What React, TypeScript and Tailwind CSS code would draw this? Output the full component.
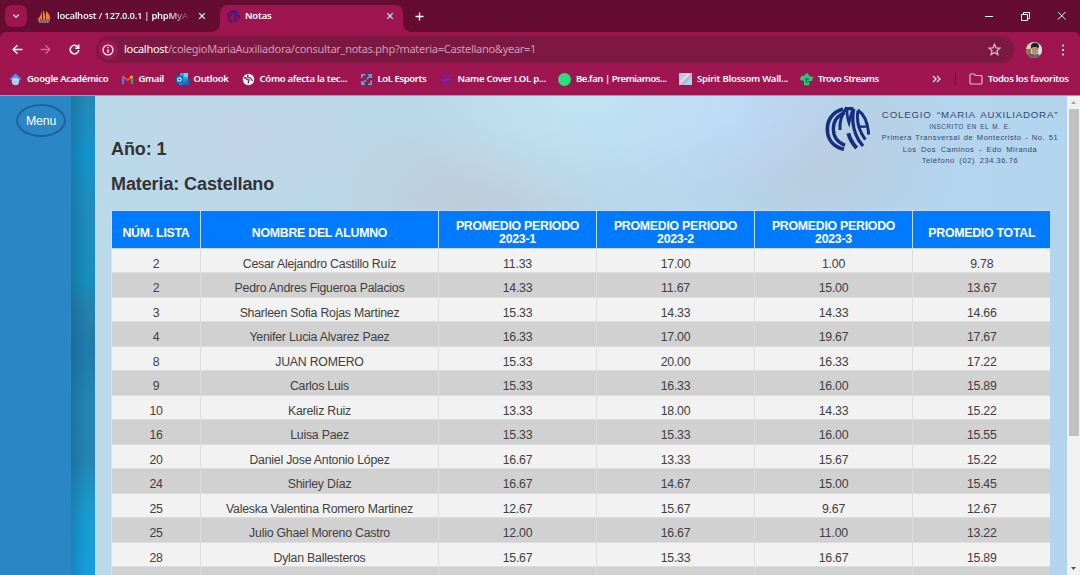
import React from "react";

type Row = [string, string, string, string, string, string];

const rows: Row[] = [
  ["2", "Cesar Alejandro Castillo Ruíz", "11.33", "17.00", "1.00", "9.78"],
  ["2", "Pedro Andres Figueroa Palacios", "14.33", "11.67", "15.00", "13.67"],
  ["3", "Sharleen Sofia Rojas Martinez", "15.33", "14.33", "14.33", "14.66"],
  ["4", "Yenifer Lucia Alvarez Paez", "16.33", "17.00", "19.67", "17.67"],
  ["8", "JUAN ROMERO", "15.33", "20.00", "16.33", "17.22"],
  ["9", "Carlos Luis", "15.33", "16.33", "16.00", "15.89"],
  ["10", "Kareliz Ruiz", "13.33", "18.00", "14.33", "15.22"],
  ["16", "Luisa Paez", "15.33", "15.33", "16.00", "15.55"],
  ["20", "Daniel Jose Antonio López", "16.67", "13.33", "15.67", "15.22"],
  ["24", "Shirley Díaz", "16.67", "14.67", "15.00", "15.45"],
  ["25", "Valeska Valentina Romero Martinez", "12.67", "15.67", "9.67", "12.67"],
  ["25", "Julio Ghael Moreno Castro", "12.00", "16.67", "11.00", "13.22"],
  ["28", "Dylan Ballesteros", "15.67", "15.33", "16.67", "15.89"],
  ["", "", "", "", "", ""],
];

const grid = "grid grid-cols-[89px_238px_158px_158px_158px_137.5px]";

function SchoolMark({ className, color }: { className: string; color: string }) {
  return (
    <svg viewBox="0 0 135 138" className={className} fill="none" stroke={color}>
      <path d="M54 9C22 18 7 43 7 69c0 32 19 54 50 61" strokeWidth="11" />
      <path d="M60 20C36 29 25 47 25 69c0 22 13 40 35 49" strokeWidth="10" />
      <path d="M65 4C52 22 43 46 45 72" strokeWidth="9" />
      <path d="M61 8h24" strokeWidth="10" />
      <path d="M66 8c0 18 2 32 6 43 3-14 6-27 12-41" strokeWidth="8" />
      <path d="M86 8c-5 27-3 53 6 76 5 14 13 26 22 36" strokeWidth="10" />
      <path d="M70 82c5 18 13 32 25 44" strokeWidth="12" />
      <path d="M98 12c20 13 31 36 33 74M99 14c-5 26 0 56 22 87" strokeWidth="9" />
      <path d="M98 62h26" strokeWidth="7" />
    </svg>
  );
}

function Bookmark({ width, icon, label, track = "" }: { width: string; icon: React.ReactNode; label: string; track?: string }) {
  return (
    <div className={`flex shrink-0 items-center gap-[5px] ${width}`}>
      <span className="flex h-[13px] w-[13px] shrink-0 items-center justify-center">{icon}</span>
      <span className={`whitespace-nowrap ${track}`}>{label}</span>
    </div>
  );
}

const s = "h-[13px] w-[13px]";

function Tabs() {
  return (
    <div className="flex h-8 items-end bg-[#650c32]">
      <div className="flex h-8 w-[220px] items-center rounded-br-[8px]">
        <div className="ml-[5px] flex h-[22px] w-[22px] items-center justify-center rounded-[7px] bg-[#9e154f]">
          <svg viewBox="0 0 8 8" className="h-2 w-2" fill="none" stroke="#fff" strokeWidth="1.3"><path d="M1.3 2.6 4 5.2l2.700-2.600" /></svg>
        </div>
        <svg viewBox="0 0 14 13" className="ml-[10px] h-[13px] w-[14px]">
          <path d="M5 1v8H1q3-3 4-8zM6 0q3 5 2 9H6zM9 1q4 3 4 8H9z" fill="#e98b25" />
          <path d="M1 10h12M2 12h10" stroke="#a9a3aa" strokeWidth="1.300" strokeDasharray="2 .6" />
        </svg>
        <div className="ml-[6px] w-[133px] whitespace-nowrap text-[9.500px] font-semibold">
          <span className="bg-[linear-gradient(to_right,#fff_113px,#650c32_133px)] bg-clip-text tracking-[-0.29px] text-transparent">localhost / 127.0.0.1 | phpMyAc</span>
        </div>
        <svg viewBox="0 0 8 8" className="ml-2 h-[8px] w-[8px]" stroke="#fff" strokeWidth="1.2"><path d="m1.200 1.200 5.600 5.600m0-5.600L1.200 6.800" /></svg>
      </div>
      <div className="relative flex h-[27px] w-[183px] items-center rounded-t-[8px] bg-[#9e154f] pl-[7px]">
        <div className="absolute bottom-0 -left-2 h-2 w-2 bg-[radial-gradient(circle_at_0_0,#650c32_7.500px,#9e154f_8px)]" />
        <div className="absolute -right-2 bottom-0 h-2 w-2 bg-[radial-gradient(circle_at_100%_0,#650c32_7.500px,#9e154f_8px)]" />
        <SchoolMark className="-mt-1 h-[13px] w-[13px]" color="#2b159b" />
        <span className="-mt-1 ml-[5px] text-[9.500px] font-semibold tracking-[-0.2px] text-white">Notas</span>
        <svg viewBox="0 0 8 8" className="-mt-[5px] mr-[9px] ml-auto h-[8px] w-[8px]" stroke="#fff" strokeWidth="1.2"><path d="m1.200 1.200 5.600 5.600m0-5.600L1.200 6.800" /></svg>
      </div>
      <div className="flex h-8 flex-1 items-center pl-[12px]">
        <svg viewBox="0 0 9 9" className="h-[9px] w-[9px]" stroke="#fff" strokeWidth="1.300"><path d="M4.500.5v8m-4-4h8" /></svg>
        <svg viewBox="0 0 82 10" className="mr-[13px] ml-auto h-[10px] w-[82px]" fill="none" stroke="#fff">
          <path d="M0 5.500h8M36.500 3.500h6v6h-6zM38.500 3V1.500h6v6h-1.500M73 1l7.500 7.500m0-7.500L73 8.500" />
        </svg>
      </div>
    </div>
  );
}

function Toolbar() {
  return (
    <div className="flex h-[31px] items-end rounded-t-[6px] bg-[#9e154f]">
      <div className="flex h-[27px] w-[96px] items-center pl-[12px]">
        <svg viewBox="0 0 11 11" className="h-[11px] w-[11px]" fill="none" stroke="#fff" strokeWidth="1.400"><path d="M10.500 5.500H1.500M5.500 1.200 1.200 5.500l4.300 4.300" /></svg>
        <svg viewBox="0 0 11 11" className="ml-[17px] h-[11px] w-[11px]" fill="none" stroke="#cc6a96" strokeWidth="1.300"><path d="M.5 5.500h9M5.500 1.200l4.300 4.300-4.300 4.300" /></svg>
        <svg viewBox="0 0 11 11" className="ml-[18px] h-[11px] w-[11px]" fill="none" stroke="#fff" strokeWidth="1.500"><path d="M9.200 3.300A4.300 4.300 0 1 0 9.800 6M9.700.5v3.700H6" /></svg>
      </div>
      <div className="flex h-[27px] w-[918px] items-center rounded-full bg-[#7c1842] pl-[2px]">
        <div className="flex h-[20px] w-[20px] items-center justify-center rounded-full bg-[#9e154f]">
          <svg viewBox="0 0 12 12" className="h-3 w-3" fill="none" stroke="#fff" strokeWidth="1.200"><circle cx="6" cy="6" r="5" /><path d="M6 5.200v3.500M6 3v1.300" /></svg>
        </div>
        <span className="ml-[6px] text-[11px] tracking-[-0.27px] whitespace-nowrap text-[#d39bb3]"><span className="text-white">localhost</span>/colegioMariaAuxiliadora/consultar_notas.php?materia=Castellano&amp;year=1</span>
        <svg viewBox="0 0 13 13" className="mr-[13px] ml-auto h-[13px] w-[13px]" fill="none" stroke="#d9b5c5" strokeWidth="1.300"><path d="m6.500 1.200 1.500 3.600 4 .3-3 2.600.9 3.900-3.400-2.100-3.400 2.100.9-3.900-3-2.600 4-.3z" /></svg>
      </div>
      <div className="flex h-[27px] flex-1 items-center pl-[12px]">
        <svg viewBox="0 0 16 16" className="h-4 w-4">
          <clipPath id="av"><circle cx="8" cy="8" r="8" /></clipPath>
          <g clipPath="url(#av)"><path fill="#d5cfc1" d="M0 0h16v16H0z" /><path fill="#94714d" d="M0 7h5v9H0z" /><path fill="#d7ded9" d="M12 3h4v10h-4z" /><path fill="#596468" d="M1 16q2-5 7-4 6-1 7 4z" /><path fill="#bb8b72" d="M6 5h6v5q-1 4-3 3-3-1-3-4z" /><path fill="#18252b" d="M5 7V3q3-4 7-1 2 2 0 5l-1-2-4 0z" /></g>
        </svg>
        <svg viewBox="0 0 4 14" className="ml-[19px] h-[14px] w-1" fill="#fff"><circle cx="2" cy="2.500" r="1.100" /><circle cx="2" cy="7" r="1.100" /><circle cx="2" cy="11.500" r="1.100" /></svg>
      </div>
    </div>
  );
}

function Bookmarks() {
  return (
    <div className="flex h-8 items-center bg-[#9e154f] pl-[9px] text-[9.500px] font-semibold text-white">
      <Bookmark width="w-[111.500px]" label="Google Académico" track="tracking-[-0.29px]" icon={<svg viewBox="0 0 13 13" className={s}><path d="m6.500.5 6 5.500-6 4-6-4z" fill="#4d91f5" /><circle cx="6.500" cy="8.500" r="3.700" fill="#a9c8f8" /><path d="M3.200 7q3.300-2 6.600 0" stroke="#e1edff" fill="none" /></svg>} />
      <Bookmark width="w-[55px]" label="Gmail" track="tracking-[-0.3px]" icon={<svg viewBox="0 0 13 13" className={s} fill="none" strokeWidth="2.200"><path d="M2 11V3" stroke="#4285f4" /><path d="M11 11V4" stroke="#34a853" /><path d="m1.500 3 5 4 4-3.200" stroke="#ea4335" /><path d="m9.500 5 2-2" stroke="#fbbc04" /></svg>} />
      <Bookmark width="w-[66px]" label="Outlook" track="tracking-[-0.35px]" icon={<svg viewBox="0 0 13 13" className={s}><path d="M4 0h8v7H4z" fill="#28a8ea" /><path d="M8 0h4v4H8z" fill="#50d9ff" /><path d="M3 6h10v6H3z" fill="#1490df" /><path d="m5 12 8-6v6z" fill="#1669bd" /><path d="M0 3h7v7H0z" fill="#0669ae" /><circle cx="3.500" cy="6.500" r="1.800" fill="none" stroke="#fff" strokeWidth="1.100" /></svg>} />
      <Bookmark width="w-[118px]" label="Cómo afecta la tec..." track="tracking-[-0.27px]" icon={<svg viewBox="0 0 13 13" className={s}><circle cx="6.500" cy="6.500" r="5.700" fill="#fff" /><path d="M2 4.500q2 0 3 2l2 .5-1 3.500M6 1.500 5.500 4l3 1 2 3" fill="none" stroke="#9e154f" strokeWidth="1.300" /></svg>} />
      <Bookmark width="w-[80px]" label="LoL Esports" track="tracking-[-0.4px]" icon={<svg viewBox="0 0 13 13" className={s} fill="none" stroke="#3cb8dd" strokeWidth="1.600"><path d="M1.800 5V1.800h3.700M8 1.800h3.200V5M11.200 7.500v3.700H8M5 11.200H1.800V8M3 10l3-3M7 6l3-3" /></svg>} />
      <Bookmark width="w-[118.500px]" label="Name Cover LOL p..." track="tracking-[-0.25px]" icon={<svg viewBox="0 0 13 13" className={s} fill="none" stroke="#6624b7" strokeWidth="1.800"><path d="M10.500 4A4.500 4.500 0 1 0 10.500 9" /><path d="M3 8.500q2-2.500 8-2" stroke="#8428b4" strokeWidth="1.400" /></svg>} />
      <Bookmark width="w-[121px]" label="Be.fan | Premiamos..." track="tracking-[-0.45px]" icon={<span className="h-[13px] w-[13px] rounded-full bg-[#27df7b]" />} />
      <Bookmark width="w-[121px]" label="Spirit Blossom Wall..." track="tracking-[-0.23px]" icon={<span className="h-[12px] w-[13px] bg-[linear-gradient(135deg,#c6bfe8_15%,#8edbe8_30%,#f1e5cf_45%,#c79de7_55%,#94dfe7_70%,#d0c5ef)]" />} />
      <Bookmark width="w-[120px]" label="Trovo Streams" track="tracking-[-0.41px]" icon={<svg viewBox="0 0 13 13" className={s}><path d="M1 3h3.500V1.500L8 0l1 3 4 1-1 4H9.500L9 12.500 4 12V8L0 7z" fill="#28c978" /><path d="M5 6h4M7 5l-1 4q2 1 3-1" stroke="#155d3e" fill="none" strokeWidth=".9" /></svg>} />
      <svg viewBox="0 0 9 8" className="ml-[12px] h-2 w-[9px] shrink-0" fill="none" stroke="#fff" strokeWidth="1.200"><path d="m1 1 3 3-3 3m4-6 3 3-3 3" /></svg>
      <div className="ml-[14px] h-3 w-px shrink-0 bg-[#68102f]" />
      <svg viewBox="0 0 14 12" className="mr-[5px] ml-[13px] h-3 w-[14px] shrink-0" fill="none" stroke="#e2c6d1" strokeWidth="1.100"><path d="M1 2q0-1 1-1h3l1.500 1.500H12q1 0 1 1V10q0 1-1 1H2q-1 0-1-1z" /></svg>
      <span className="whitespace-nowrap tracking-[-0.31px]">Todos los favoritos</span>
    </div>
  );
}

function Letterhead() {
  return (
    <div className="absolute top-[10px] right-[9px] flex text-[#35466c]">
      <SchoolMark className="h-[46px] w-[45px]" color="#172d7d" />
      <div className="ml-[12px] flex w-[176px] flex-col items-center pt-[2px] whitespace-nowrap text-[7.500px] leading-[11.500px]">
        <div className="text-[9.700px] leading-[14px] tracking-[0.800px] [word-spacing:2px]">COLEGIO “MARIA AUXILIADORA”</div>
        <div className="text-[6.300px] leading-[10px] tracking-[0.580px] [word-spacing:1px]">INSCRITO EN EL M. E.</div>
        <div className="tracking-[0.540px] [word-spacing:1px]">Primera Transversal de Montecristo - No. 51</div>
        <div className="tracking-[0.560px] [word-spacing:2px]">Los Dos Caminos - Edo Miranda</div>
        <div className="tracking-[0.580px] [word-spacing:2px]">Teléfono (02) 234.36.76</div>
      </div>
    </div>
  );
}

export default function App() {
  return (
    <div className="flex h-[575px] w-[1080px] flex-col overflow-hidden bg-[#650c32] font-['Noto_Sans',sans-serif]">
      <Tabs />
      <Toolbar />
      <Bookmarks />
      <div className="flex min-h-0 flex-1 border-t border-[#9b9bb8] font-['Liberation_Sans',sans-serif]">
        <aside className="w-[71px] shrink-0 bg-[#2a86c5] pt-2 pl-4">
          <button className="flex h-[33px] w-[50px] items-center justify-center rounded-[50%] border-2 border-[#1a659b] pt-px text-[12.300px] tracking-[-0.15px] text-white">Menu</button>
        </aside>
        <div className="w-6 shrink-0 bg-[linear-gradient(to_right,#10508055,transparent_65%),linear-gradient(to_bottom,#2588b4,#1594cd_12%,#1f8abd_25%,#168fbd_38%,#2680a9_45%,#207aad_53%,#2086b0_63%,#2583b0_75%,#199bd0_87%,#159fdd)]" />
        <main className="relative w-[972px] shrink-0 overflow-hidden bg-[radial-gradient(ellipse_190px_110px_at_490px_0px,#c2e4f5,#c2e4f500),radial-gradient(ellipse_150px_110px_at_370px_110px,#bfcddb,#bfcddb00),radial-gradient(ellipse_130px_90px_at_630px_10px,#bfd8f7,#bfd8f700),radial-gradient(ellipse_140px_110px_at_725px_60px,#b9cde0,#b9cde000),radial-gradient(ellipse_180px_120px_at_150px_40px,#c0d5e7,#c0d5e700),linear-gradient(to_right,#b9dae9,#b8d7ea_50%,#b2d4ee)] px-4">
          <Letterhead />
          <h2 className="mt-[42px] text-[18px] leading-[22px] font-bold tracking-[-0.1px] text-[#333]">Año: 1</h2>
          <h2 className="mt-[13px] text-[18px] leading-[22px] font-bold tracking-[-0.1px] text-[#333]">Materia: Castellano</h2>
          <div className="mt-[15px] w-[939px] border-l border-[#d7e5ee]">
            <div className={`${grid} h-[38.500px] border-t border-b border-[#c9dced] bg-[#007bff] text-center text-[12.300px] leading-[13.500px] font-bold tracking-[-0.24px] text-white`}>
              {["NÚM. LISTA", "NOMBRE DEL ALUMNO", "PROMEDIO PERIODO 2023-1", "PROMEDIO PERIODO 2023-2", "PROMEDIO PERIODO 2023-3", "PROMEDIO TOTAL"].map((h) => (
                <div key={h} className="flex items-center justify-center border-r border-[#c5dbef] px-[9px] pt-[8px] last:border-r-0">{h}</div>
              ))}
            </div>
            {rows.map((r, i) => (
              <div key={i} className={`${grid} h-[24.500px] border-b border-[#ddd] text-center text-[12.300px] tracking-[-0.22px] text-[#404040] ${i % 2 ? "bg-[#d1d1d1]" : "bg-[#f2f2f2]"}`}>
                {r.map((c, j) => (
                  <div key={j} className="border-r border-[#ddd] pt-[7px] leading-[16px] whitespace-nowrap last:border-r-0">{c}</div>
                ))}
              </div>
            ))}
          </div>
        </main>
        <div className="flex flex-1 flex-col items-center bg-[#f1f1f1]">
          <svg viewBox="0 0 13 13" className="h-[13px] w-[13px] shrink-0"><path d="M6.500 5 9 8H4z" fill="#a3a3a3" /></svg>
          <div className="h-[327px] w-[10px] bg-[#c1c1c1]" />
          <svg viewBox="0 0 13 13" className="mt-auto h-[13px] w-[13px] shrink-0"><path d="M6.500 8 9 5H4z" fill="#505050" /></svg>
        </div>
      </div>
    </div>
  );
}
